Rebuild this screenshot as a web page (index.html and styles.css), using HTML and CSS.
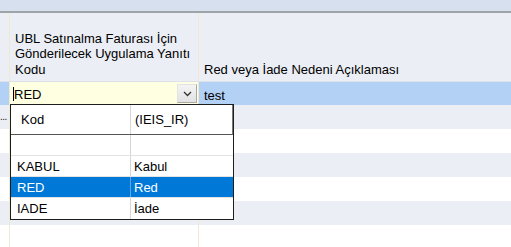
FILE: index.html
```html
<!DOCTYPE html>
<html lang="tr">
<head>
    <meta charset="UTF-8">
    <title>Uygulama Yanıtı</title>
    <link rel="stylesheet" href="styles.css">
</head>
<body>
    <div class="topbar"></div>
    <div class="grid">
        <div class="row header">
            <div class="cell ind"></div>
            <div class="cell col1">UBL Satınalma Faturası İçin<br>Gönderilecek Uygulama Yanıtı<br>Kodu</div>
            <div class="cell col2">Red veya İade Nedeni Açıklaması</div>
        </div>
        <div class="row selected">
            <div class="cell ind"></div>
            <div class="cell col1 editor">
                <span class="caret"></span><span class="value">RED</span>
                <span class="drop-btn">
                    <svg width="9" height="6" viewBox="0 0 9 6"><path d="M1 1 L4.5 4.5 L8 1" fill="none" stroke="#333" stroke-width="1.3"/></svg>
                </span>
            </div>
            <div class="cell col2 val">test</div>
        </div>
        <div class="row alt">
            <div class="cell ind dots">...</div>
            <div class="cell col1"></div>
            <div class="cell col2"></div>
        </div>
        <div class="row">
            <div class="cell ind"></div>
            <div class="cell col1"></div>
            <div class="cell col2"></div>
        </div>
        <div class="row alt">
            <div class="cell ind"></div>
            <div class="cell col1"></div>
            <div class="cell col2"></div>
        </div>
        <div class="row">
            <div class="cell ind"></div>
            <div class="cell col1"></div>
            <div class="cell col2"></div>
        </div>
        <div class="row alt">
            <div class="cell ind"></div>
            <div class="cell col1"></div>
            <div class="cell col2"></div>
        </div>
        <div class="row filler">
            <div class="cell ind"></div>
            <div class="cell col1"></div>
            <div class="cell col2"></div>
        </div>

        <div class="popup">
            <div class="p-row p-head">
                <div class="p-cell p-c1">Kod</div>
                <div class="p-cell p-c2">(IEIS_IR)</div>
            </div>
            <div class="p-row">
                <div class="p-cell p-c1"></div>
                <div class="p-cell p-c2"></div>
            </div>
            <div class="p-row">
                <div class="p-cell p-c1">KABUL</div>
                <div class="p-cell p-c2">Kabul</div>
            </div>
            <div class="p-row p-sel">
                <div class="p-cell p-c1">RED</div>
                <div class="p-cell p-c2">Red</div>
            </div>
            <div class="p-row">
                <div class="p-cell p-c1">IADE</div>
                <div class="p-cell p-c2">İade</div>
            </div>
        </div>
    </div>
</body>
</html>
```

FILE: styles.css
```css
body {
    margin: 0;
    width: 511px;
    height: 247px;
    overflow: hidden;
    background: #ffffff;
    font-family: 'Liberation Sans', Arial, sans-serif;
    font-size: 13px;
    color: #000;
    display: flex;
    flex-direction: column;
}
.topbar {
    height: 11px;
    background: #d6e0ef;
    border-bottom: 2px solid #9fa4a9;
}
.grid {
    position: relative;
    flex: 1;
    display: flex;
    flex-direction: column;
}
.row {
    display: flex;
    height: 24px;
}
.cell {
    box-sizing: border-box;
    border-right: 1px solid #efe9d2;
}
.ind {
    width: 10px;
}
.col1 {
    width: 189px;
}
.col2 {
    flex: 1;
    border-right: none;
}
.header {
    height: 68px;
    background: #ebeef5;
    border-bottom: 1px solid #dde2ea;
}
.header .cell {
    display: flex;
    align-items: flex-end;
    padding: 0 0 4px 5px;
    line-height: 15.5px;
}
.header .ind {
    padding: 0;
}
.selected {
    height: 23px;
    background: #b3d1f4;
}
.alt {
    background: #ebeef5;
}
.filler {
    flex: 1;
}
.editor {
    background: #ffffe1;
    display: flex;
    align-items: center;
    padding-left: 3px;
    position: relative;
}
.caret {
    width: 1px;
    height: 14px;
    background: #000;
}
.value {
    margin-top: 1px;
}
.drop-btn {
    position: absolute;
    right: 1px;
    top: 2px;
    width: 20px;
    height: 19px;
    box-sizing: border-box;
    border: 1px solid #a9a9a9;
    border-top-color: #e3e3e3;
    border-left-color: #e3e3e3;
    background: linear-gradient(#f4f4f4, #e2e2e2);
    display: flex;
    align-items: center;
    justify-content: center;
}
.val {
    display: flex;
    align-items: center;
    padding: 3px 0 0 5px;
}
.dots {
    font-size: 10px;
    line-height: 10px;
    overflow: hidden;
    white-space: nowrap;
    display: flex;
    align-items: flex-end;
    padding-bottom: 7px;
    letter-spacing: -0.5px;
    color: #222;
}
.popup {
    position: absolute;
    left: 10px;
    top: 91px;
    width: 224px;
    box-sizing: border-box;
    border: 1px solid #1c1c1c;
    background: #ffffff;
}
.p-row {
    display: flex;
    height: 21px;
    box-sizing: border-box;
    border-bottom: 1px solid #e3e3e3;
}
.p-row:last-child {
    border-bottom: none;
}
.p-cell {
    display: flex;
    align-items: center;
    box-sizing: border-box;
}
.p-c1 {
    width: 120px;
    padding-left: 6px;
    border-right: 1px solid #d6d6d6;
}
.p-c2 {
    flex: 1;
    padding-left: 3px;
}
.p-head {
    height: 30px;
    border-bottom: 1px solid #555555;
    border-right: 1px solid #777777;
}
.p-head .p-c1 {
    padding-left: 10px;
}
.p-head .p-c2 {
    padding-left: 4px;
}
.p-sel {
    background: #0078d7;
    color: #ffffff;
}
.p-sel .p-c1 {
    border-right-color: #5fa6e4;
}
```
